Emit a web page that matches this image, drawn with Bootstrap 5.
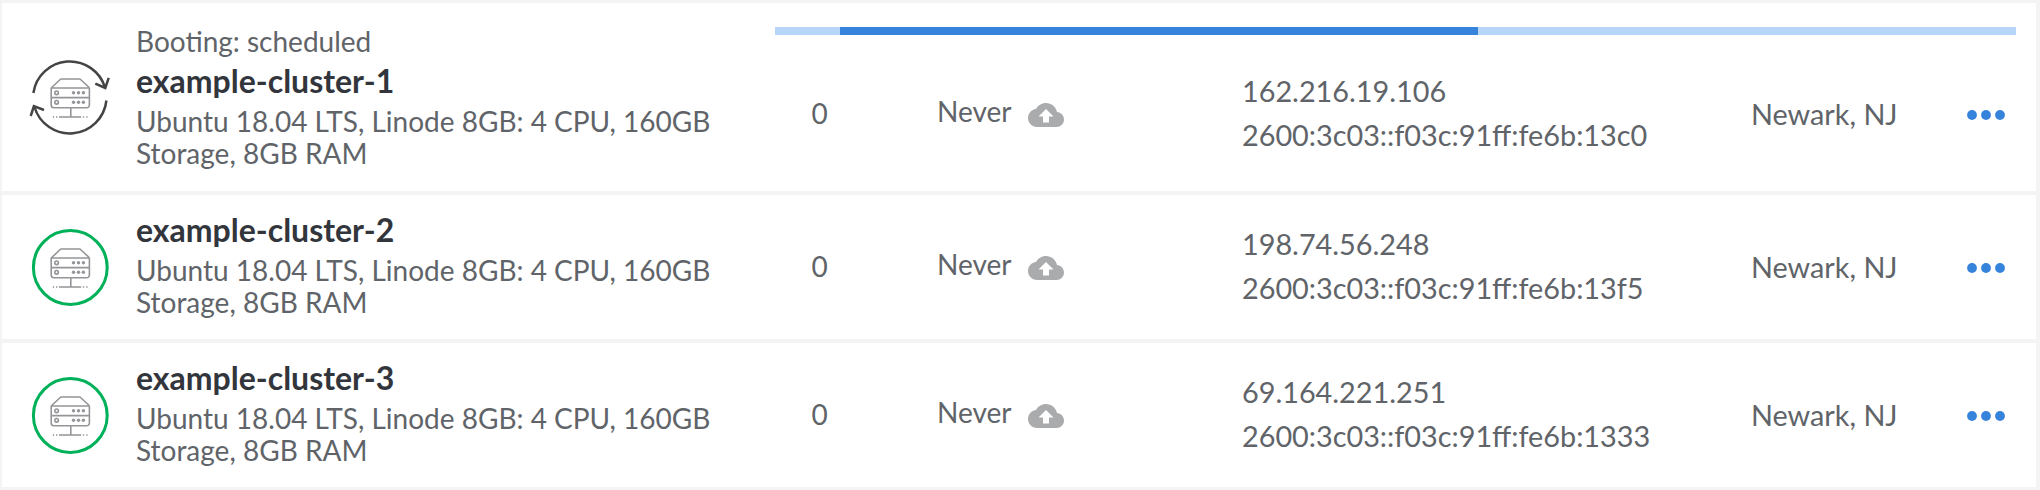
<!DOCTYPE html>
<html lang="en">
<head>
<meta charset="utf-8">
<meta name="viewport" content="width=device-width, initial-scale=1">
<title>Linodes</title>
<link href="https://cdn.jsdelivr.net/npm/bootstrap@5.3.0/dist/css/bootstrap.min.css" rel="stylesheet">
<style>
  body { background: #f4f4f4; color: #606469; font-family: Lato, sans-serif; font-size: 28px; line-height: 32px; overflow: hidden; }
  .linodes { padding: 3px 4px 3px 2px; gap: 4px; }
  .linode { height: 144px; }
  .linode.busy { height: 188px; }
  .status { width: 134px; padding-left: 26.4px; }
  .info { width: 639px; padding: 0 55px 7px 0; }
  .busy .info { padding-bottom: 0; }
  .label { font-size: 32px; line-height: 40px; font-weight: 700; color: #32363c; }
  .busy .label { margin-top: 4px; }
  .desc { margin-top: 4px; }
  .details { padding-right: 20px; }
  .progress { height: 8px; margin: 24px 0 2px; border-radius: 0; background: #b7d6f9; }
  .progress-lead { width: 65px; }
  .progress-bar { background: #3683dc; }
  .cells { padding-left: 36px; }
  .c-count { width: 126px; padding: 0 0 3px .5px; }
  .c-backup { width: 305px; gap: 16.5px; }
  .c-backup span { padding-bottom: 7px; }
  .c-backup svg, .c-menu { margin-top: 2px; }
  .c-ip { width: 509px; font-size: 28.8px; line-height: 44px; padding-bottom: 2px; }
  .c-region { width: 215px; font-size: 28.8px; padding-bottom: 1px; }
</style>
</head>
<body>
<svg class="d-none" xmlns="http://www.w3.org/2000/svg">
  <symbol id="server" viewBox="0 0 84 84">
    <g fill="none" stroke="#939598" stroke-width="1.6" stroke-linejoin="round">
      <path d="M23.7 32.5 32.8 24h19.2l9.2 8.5M23.2 33h38.2v17a2.8 2.8 0 0 1-2.8 2.8H26a2.8 2.8 0 0 1-2.8-2.8zM23.2 42.6h38.2M42.8 52.8V62M31 62h22.2"/>
      <circle cx="28.6" cy="37.8" r="1.8"/><circle cx="28.6" cy="47.3" r="1.8"/>
      <path d="M24.8 62h1.4M28 62h1.4M54.8 62h1.4M58.2 62h1.4"/>
    </g>
    <g fill="#939598"><circle cx="45.5" cy="37.8" r="1.7"/><circle cx="50.5" cy="37.8" r="1.7"/><circle cx="55.4" cy="37.8" r="1.7"/><circle cx="45.5" cy="47.3" r="1.7"/><circle cx="50.5" cy="47.3" r="1.7"/><circle cx="55.4" cy="47.3" r="1.7"/></g>
  </symbol>
  <symbol id="cloud" viewBox="0 0 24 24">
    <path fill="#aaabad" d="M19.35 10.04C18.67 6.59 15.64 4 12 4 9.11 4 6.6 5.64 5.35 8.04 2.34 8.36 0 10.91 0 14c0 3.31 2.69 6 6 6h13c2.76 0 5-2.24 5-5 0-2.64-2.05-4.78-4.65-4.96zM14 13v4h-4v-4H7l5-5 5 5h-3z"/>
  </symbol>
  <symbol id="dots" viewBox="0 0 40 12">
    <g fill="#3683dc"><circle cx="6" cy="6" r="4.9"/><circle cx="20" cy="6" r="4.9"/><circle cx="34" cy="6" r="4.9"/></g>
  </symbol>
</svg>

<main class="linodes d-flex flex-column">
  <section class="linode busy bg-white d-flex">
    <div class="status d-flex align-items-center flex-shrink-0">
      <svg width="84" height="84" viewBox="0 0 84 84">
        <use href="#server"/>
        <g fill="none" stroke="#444" stroke-width="2.5">
          <path d="M5.4 38A36.8 36.8 0 0 1 77 32.5M78.4 45.5A36.8 36.8 0 0 1 6.5 52"/>
          <path d="M67.3 28.6 77.3 33 80.7 22.9M2.7 61 5.9 51.2 16 55"/>
        </g>
      </svg>
    </div>
    <div class="info d-flex flex-column justify-content-center flex-shrink-0">
      <div>Booting: scheduled</div>
      <div class="label">example-cluster-1</div>
      <div class="desc">Ubuntu 18.04 LTS, Linode 8GB: 4 CPU, 160GB Storage, 8GB RAM</div>
    </div>
    <div class="details d-flex flex-column flex-grow-1">
      <div class="progress flex-shrink-0"><div class="progress-lead"></div><div class="progress-bar" style="width: 638px"></div></div>
      <div class="cells d-flex align-items-center flex-grow-1">
        <div class="c-count">0</div>
        <div class="c-backup d-flex align-items-center"><span>Never</span><svg width="36" height="36"><use href="#cloud"/></svg></div>
        <div class="c-ip"><div>162.216.19.106</div><div>2600:3c03::f03c:91ff:fe6b:13c0</div></div>
        <div class="c-region">Newark, NJ</div>
        <svg class="c-menu" width="40" height="12"><use href="#dots"/></svg>
      </div>
    </div>
  </section>

  <section class="linode bg-white d-flex">
    <div class="status d-flex align-items-center flex-shrink-0">
      <svg width="84" height="84" viewBox="0 0 84 84"><use href="#server"/><circle cx="42.3" cy="42.5" r="36.9" fill="none" stroke="#00b159" stroke-width="3"/></svg>
    </div>
    <div class="info d-flex flex-column justify-content-center flex-shrink-0">
      <div class="label">example-cluster-2</div>
      <div class="desc">Ubuntu 18.04 LTS, Linode 8GB: 4 CPU, 160GB Storage, 8GB RAM</div>
    </div>
    <div class="details d-flex flex-column flex-grow-1">
      <div class="cells d-flex align-items-center flex-grow-1">
        <div class="c-count">0</div>
        <div class="c-backup d-flex align-items-center"><span>Never</span><svg width="36" height="36"><use href="#cloud"/></svg></div>
        <div class="c-ip"><div>198.74.56.248</div><div>2600:3c03::f03c:91ff:fe6b:13f5</div></div>
        <div class="c-region">Newark, NJ</div>
        <svg class="c-menu" width="40" height="12"><use href="#dots"/></svg>
      </div>
    </div>
  </section>

  <section class="linode bg-white d-flex">
    <div class="status d-flex align-items-center flex-shrink-0">
      <svg width="84" height="84" viewBox="0 0 84 84"><use href="#server"/><circle cx="42.3" cy="42.5" r="36.9" fill="none" stroke="#00b159" stroke-width="3"/></svg>
    </div>
    <div class="info d-flex flex-column justify-content-center flex-shrink-0">
      <div class="label">example-cluster-3</div>
      <div class="desc">Ubuntu 18.04 LTS, Linode 8GB: 4 CPU, 160GB Storage, 8GB RAM</div>
    </div>
    <div class="details d-flex flex-column flex-grow-1">
      <div class="cells d-flex align-items-center flex-grow-1">
        <div class="c-count">0</div>
        <div class="c-backup d-flex align-items-center"><span>Never</span><svg width="36" height="36"><use href="#cloud"/></svg></div>
        <div class="c-ip"><div>69.164.221.251</div><div>2600:3c03::f03c:91ff:fe6b:1333</div></div>
        <div class="c-region">Newark, NJ</div>
        <svg class="c-menu" width="40" height="12"><use href="#dots"/></svg>
      </div>
    </div>
  </section>
</main>
<script src="https://cdn.jsdelivr.net/npm/bootstrap@5.3.0/dist/js/bootstrap.bundle.min.js"></script>
</body>
</html>
